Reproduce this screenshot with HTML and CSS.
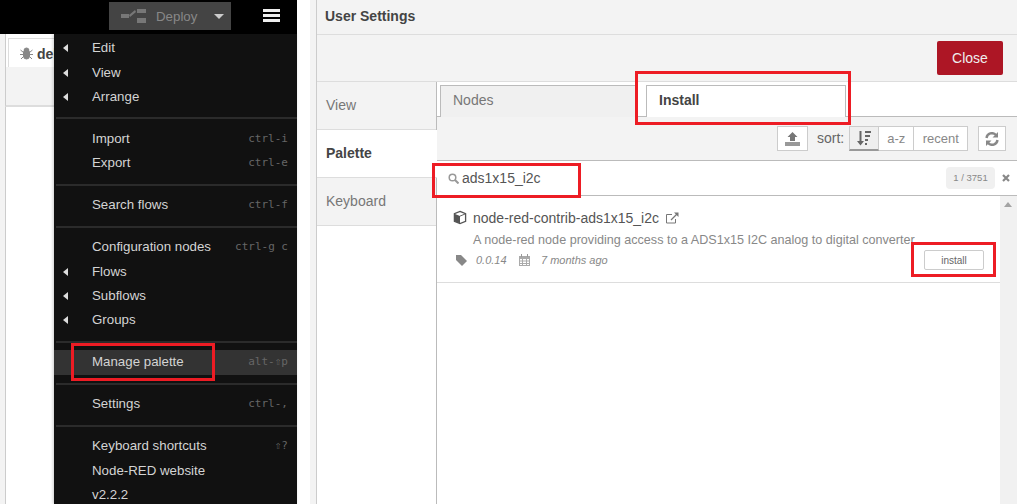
FILE: index.html
```html
<!DOCTYPE html>
<html lang="en">
<head>
  <meta charset="UTF-8">
  <title>Node-RED User Settings</title>
  <link rel="stylesheet" href="styles.css">
</head>
<body>

<div class="page">

  <div class="editor">
    <header class="topbar">
      <div class="deploy">
        <svg class="deploy-icon" width="27" height="16" viewBox="0 0 27 16"><path d="M1 6h8v4H1zM17 1h9v4h-9zM17 10h9v5h-9zM9 7l6-5 1 2-6 5z"/></svg>
        <span class="deploy-label">Deploy</span>
        <span class="deploy-caret"></span>
      </div>
      <div class="burger"><i></i><i></i><i></i></div>
    </header>

    <div class="workspace">
      <div class="ws-tabs">
        <div class="ws-tab">
          <svg width="13" height="13" viewBox="0 0 13 13"><path d="M4 3.500a2.500 2.500 0 0 1 5 0zM3.500 4.500h6V9a3 3 0 0 1-6 0zM0.500 3l3 2.500M12.500 3l-3 2.500M0 7.500h3.500M13 7.500H9.500M1 12l2.500-2.500M12 12L9.500 9.500" fill="#888" stroke="#888"/></svg>
          <b>debug</b>
        </div>
      </div>
      <div class="ws-strip"></div>
      <div class="ws-blank"></div>

      <div class="menu">
        <div class="row sub">Edit</div>
        <div class="row sub">View</div>
        <div class="row sub">Arrange</div>
        <hr>
        <div class="row">Import<kbd>ctrl-i</kbd></div>
        <div class="row">Export<kbd>ctrl-e</kbd></div>
        <hr>
        <div class="row">Search flows<kbd>ctrl-f</kbd></div>
        <hr>
        <div class="row">Configuration nodes<kbd>ctrl-g c</kbd></div>
        <div class="row sub">Flows</div>
        <div class="row sub">Subflows</div>
        <div class="row sub">Groups</div>
        <hr>
        <div class="row hover">Manage palette<kbd>alt-⇧p</kbd></div>
        <hr>
        <div class="row">Settings<kbd>ctrl-,</kbd></div>
        <hr>
        <div class="row">Keyboard shortcuts<kbd>⇧?</kbd></div>
        <div class="row">Node-RED website</div>
        <div class="row">v2.2.2</div>
      </div>
    </div>
  </div>

  <div class="gutter"></div>

  <div class="settings">
    <div class="set-title">User Settings</div>
    <div class="set-actions"><button class="close">Close</button></div>

    <div class="set-body">
      <nav class="side">
        <a>View</a>
        <a class="on">Palette</a>
        <a>Keyboard</a>
      </nav>

      <div class="pane">
        <div class="pal-tabs">
          <div class="pal-tab">Nodes</div>
          <div class="pal-tab on">Install</div>
        </div>

        <div class="tools">
          <button class="btn upload">
            <svg width="15" height="14" viewBox="0 0 15 14"><path d="M7.500 0l5 5H10v4H5V5H2.500z" fill="#777"/><path d="M0 10h15v4H0z" fill="#999"/></svg>
          </button>
          <span class="sort-label">sort:</span>
          <div class="group">
            <button class="btn sort on">
              <svg width="14" height="15" viewBox="0 0 14 15"><path d="M2.500 0h2v10H7l-3.500 4.500L0 10h2.500zM8 0h6v2H8zM8 4h5v2H8zM8 8h3v2H8zM8 12h2v2H8z" fill="#666"/></svg>
            </button>
            <button class="btn az">a-z</button>
            <button class="btn recent">recent</button>
          </div>
          <button class="btn refresh">
            <svg width="14" height="14" viewBox="0 0 14 14"><path d="M1.500 6a5.500 5.500 0 0 1 9.500-3M12.500 8a5.500 5.500 0 0 1-9.500 3" fill="none" stroke="#888" stroke-width="2.400"/><path d="M13 0v5.500H7.500zM1 14V8.500h5.500z" fill="#888"/></svg>
          </button>
        </div>

        <div class="search">
          <svg width="11" height="11" viewBox="0 0 11 11"><circle cx="4.500" cy="4.500" r="3.300" fill="none" stroke="#999" stroke-width="1.500"/><path d="M7 7l3.500 3.500" stroke="#999" stroke-width="2"/></svg>
          <span class="query">ads1x15_i2c</span>
          <span class="count">1 / 3751</span>
          <svg class="clear" width="8" height="8" viewBox="0 0 8 8"><path d="M1 1l6 6M7 1L1 7" stroke="#888" stroke-width="2.200"/></svg>
        </div>

        <div class="results">
          <div class="list">
            <div class="item">
              <div class="item-name">
                <svg width="14" height="15" viewBox="0 0 15 15"><path d="M7.500 1l6 2.500v8l-6 2.500-6-2.500v-8z" fill="none" stroke="#555" stroke-width="1.400"/><path d="M1.500 3.500l6 2.500v8l-6-2.500z" fill="#555"/><path d="M7.500 6l6-2.500" stroke="#555"/></svg>
                <span>node-red-contrib-ads1x15_i2c</span>
                <svg class="ext" width="13" height="12" viewBox="0 0 13 12"><path d="M9.500 7v4h-9V2.500H6" fill="none" stroke="#777"/><path d="M5 8l6-6" stroke="#777" stroke-width="1.300"/><path d="M8 .5h4.500V5z" fill="#777"/></svg>
              </div>
              <div class="item-desc">A node-red node providing access to a ADS1x15 I2C analog to digital converter</div>
              <div class="item-meta">
                <svg class="tag" width="11" height="11" viewBox="0 0 11 11"><path d="M0 0h5l6 6-5 5-6-6z" fill="#888"/></svg>
                <i class="ver">0.0.14</i>
                <svg class="cal" width="11" height="12" viewBox="0 0 11 12"><path d="M0 2h11v10H0z" fill="#aaa"/><path d="M2 0h1v3H2zM8 0h1v3H8z" fill="#999"/><path d="M1 5h2v1.500H1zM4 5h3v1.500H4zM8 5h2v1.500H8zM1 7.500h2V9H1zM4 7.500h3V9H4zM8 7.500h2V9H8zM1 10h2v1H1zM4 10h3v1H4zM8 10h2v1H8z" fill="#fff"/></svg>
                <i class="ago">7 months ago</i>
                <button class="install">install</button>
              </div>
            </div>
          </div>
          <div class="scroll"><span></span></div>
        </div>
      </div>
    </div>
  </div>

  <div class="mark mark-manage"></div>
  <div class="mark mark-tab"></div>
  <div class="mark mark-search"></div>
  <div class="mark mark-install"></div>
</div>

</body>
</html>
```

FILE: styles.css
```css
* { box-sizing: border-box; }
html, body { margin: 0; height: 100%; overflow: hidden; }
body { font-family: "Liberation Sans", Arial, sans-serif; font-size: 14px; background: #fff; color: #555; }
button { font-family: inherit; }

.page { position: relative; display: flex; width: 1017px; height: 504px; }

/* left: node-red editor with menu open */
.editor { width: 297px; display: flex; flex-direction: column; }
.topbar { height: 34px; flex: none; background: #000; display: flex; align-items: flex-start; padding: 2px 0 0 109px; }
.deploy { width: 122px; height: 28px; background: #444; display: flex; align-items: center; padding-left: 11px; }
.deploy-icon { fill: #777; }
.deploy-label { color: #888; margin-left: 9px; font-size: 13.300px; }
.deploy-caret { margin-left: 17px; border: 5px solid transparent; border-top-color: #ccc; border-bottom: 0; }
.burger { margin: 7px 0 0 32px; width: 17px; display: flex; flex-direction: column; gap: 2px; }
.burger i { display: block; height: 3px; background: #eee; }

.workspace { position: relative; flex: 1; display: flex; flex-direction: column; border-left: 5px solid #f3f3f3; }
.ws-tabs { height: 33px; padding: 4px 0 0 2px; border-left: 1px solid #ccc; }
.ws-tab { height: 30px; width: 120px; border: 1px solid #ddd; border-bottom: 0; display: flex; align-items: center; gap: 4px; padding-left: 11px; font-size: 14px; color: #444; }
.ws-strip { height: 40px; background: #f3f3f3; border-left: 1px solid #ccc; border-bottom: 2px solid #ddd; }
.ws-blank { flex: 1; border-left: 1px solid #ccc; }

.menu { position: absolute; left: 49px; top: 0; right: 0; bottom: 0; background: #111; padding-top: 2.200px; overflow: hidden; box-shadow: -1px 0 3px rgba(0,0,0,.2); }
.row { position: relative; height: 24.400px; line-height: 24.400px; padding-left: 38px; color: #d4d4d4; font-size: 13.300px; }
.row.sub::before { content: ""; position: absolute; left: 9px; top: 8px; border: 4.500px solid transparent; border-right: 5px solid #ddd; border-left: 0; }
.row.hover { background: #333; }
.row kbd { position: absolute; right: 9px; top: 0; font-family: "DejaVu Sans Mono", "Liberation Mono", monospace; font-size: 11px; color: #666; }
.menu hr { height: 2px; border: 0; margin: 7.800px 0 7.800px 2px; background: #2b2b2b; }

.gutter { width: 19px; flex: none; background: linear-gradient(to right, #fff 13px, #f3f3f3 13px); }

/* right: settings dialog */
.settings { flex: 1; display: flex; flex-direction: column; border-left: 1px solid #ccc; min-width: 0; }
.set-title { height: 35px; flex: none; background: #f3f3f3; border-bottom: 1px solid #ddd; padding: 0 8px; line-height: 33px; font-weight: bold; color: #444; font-size: 14px; }
.set-actions { height: 47px; flex: none; background: #f3f3f3; border-bottom: 1px solid #ddd; display: flex; justify-content: flex-end; align-items: flex-start; padding: 6px 14px 0 0; }
.close { width: 66px; height: 34px; background: #ad1625; border: 0; border-radius: 2px; color: #eee; font-size: 14px; }

.set-body { flex: 1; display: flex; min-height: 0; }
.side { width: 120px; flex: none; border-right: 1px solid #bbb; display: flex; flex-direction: column; }
.side a { height: 48px; line-height: 46px; padding-left: 9px; background: #f3f3f3; color: #777; border-bottom: 1px solid #ddd; }
.side a.on { background: #fff; color: #444; font-weight: bold; margin-right: -1px; position: relative; }

.pane { flex: 1; display: flex; flex-direction: column; min-width: 0; }
.pal-tabs { height: 35px; flex: none; display: flex; gap: 9px; padding: 3px 0 0 3px; border-bottom: 1px solid #bbb; }
.pal-tab { width: 197px; height: 32px; background: #f0f0f0; border: 1px solid #bbb; border-bottom: 0; padding-left: 12px; line-height: 29px; color: #777; }
.pal-tab.on { width: 200px; background: #fff; color: #444; font-weight: bold; }

.tools { height: 44px; flex: none; background: #f3f3f3; border-bottom: 1px solid #bbb; display: flex; align-items: flex-start; padding: 9px 0 0 340px; }
.btn { height: 25px; background: #fff; border: 1px solid #ccc; color: #888; font-size: 13px; padding: 0; display: flex; align-items: center; justify-content: center; }
.upload { width: 31px; }
.sort-label { margin: 0 5px 0 9px; line-height: 24px; color: #666; }
.group { display: flex; }
.sort { width: 30px; }
.sort.on { background: #efefef; border-bottom: 2px solid #999; }
.az { width: 35px; border-left: 0; }
.recent { width: 54px; border-left: 0; }
.refresh { width: 28px; margin-left: 10px; }

.search { height: 35px; flex: none; border-bottom: 1px solid #bbb; display: flex; align-items: center; padding-left: 11px; }
.query { margin-left: 3px; color: #555; }
.count { margin-left: auto; width: 49px; height: 22px; line-height: 22px; background: #f0f0f0; border-radius: 4px; text-align: center; font-size: 9.500px; color: #888; }
.clear { margin: 0 7px 0 7px; }

.results { flex: 1; display: flex; min-height: 0; }
.list { flex: 1; min-width: 0; }
.item { height: 87px; border-bottom: 1px solid #ddd; padding: 13px 0 0 16px; }
.item-name { display: flex; align-items: center; gap: 6px; height: 17px; color: #555; }
.item-name .ext { margin-left: 1px; }
.item-desc { margin: 6px 0 0 20px; height: 16px; line-height: 16px; font-size: 12.600px; color: #888; white-space: nowrap; }
.item-meta { display: flex; align-items: center; height: 22px; margin-top: 1px; font-size: 11px; color: #888; }
.tag { margin-left: 3px; }
.ver { margin-left: 9px; width: 43px; }
.ago { margin-left: 11px; }
.install { margin-left: auto; margin-right: 16px; width: 60px; height: 20px; background: #fff; border: 1px solid #ccc; border-radius: 2px; font-size: 10px; color: #666; padding: 0; }
.scroll { width: 17px; flex: none; background: #f1f1f1; padding: 6px 0 0 4px; }
.scroll span { display: block; width: 0; border: 4px solid transparent; border-bottom: 5px solid #a3a3a3; border-top: 0; }

/* red annotation boxes drawn over the shot */
.mark { position: absolute; border: 3px solid #ed1c24; }
.mark-manage { left: 71px; top: 343px; width: 144px; height: 38px; }
.mark-tab { left: 635px; top: 71px; width: 216px; height: 54px; }
.mark-search { left: 432px; top: 163px; width: 149px; height: 35px; }
.mark-install { left: 911px; top: 242px; width: 85px; height: 35px; }
```
